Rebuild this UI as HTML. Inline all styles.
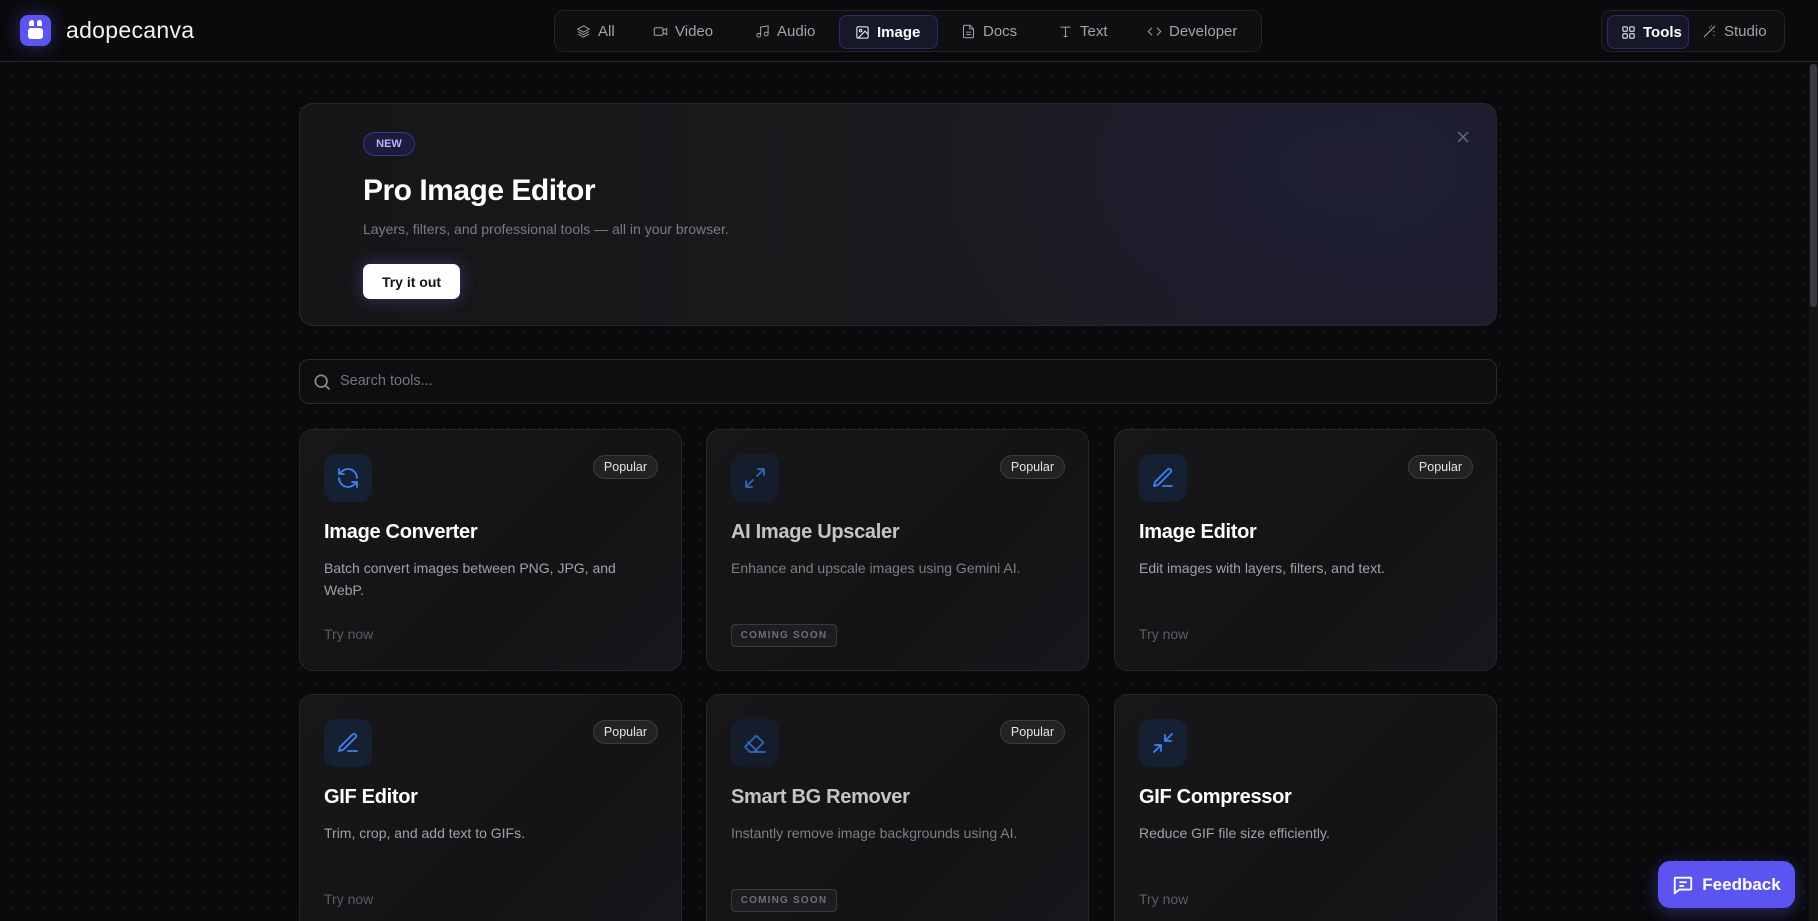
<!DOCTYPE html>
<html><head><meta charset="utf-8">
<style>
*{box-sizing:border-box;margin:0;padding:0}
html,body{width:1818px;height:921px;overflow:hidden}
body{background:#0a0a0c;font-family:"Liberation Sans",sans-serif;color:#fff;position:relative;
background-image:radial-gradient(circle,#1c1c20 1px,transparent 1.3px);background-size:16px 16px;background-position:4px 4px}
.hdr{position:absolute;left:0;top:0;width:1818px;height:62px;background:#0a0a0c;border-bottom:1px solid #26262b}
.abs{position:absolute}
.logo{left:20px;top:15px;width:31px;height:31px;border-radius:8px;background:#5b54f0;box-shadow:0 0 18px rgba(91,84,240,.45)}
.brand{left:66px;top:17px;font-size:23px;color:#f2f2f2;letter-spacing:.3px}
.nav{left:554px;top:10px;width:708px;height:42px;border:1px solid #222227;border-radius:10px;background:#0f0f12}
.ni{position:absolute;top:0;height:40px;display:flex;align-items:center;gap:7px;font-size:15px;color:#a3a3aa}
.ni svg{width:15px;height:15px;stroke:#a3a3aa;fill:none;stroke-width:1.6}
.act{background:#17172a;border:1px solid #2d2b6a;border-radius:8px;color:#fff;font-weight:bold}
.act svg{stroke:#fff}
.rt{left:1601px;top:10px;width:184px;height:42px;border:1px solid #222227;border-radius:10px;background:#0f0f12}
.sb{left:1809px;top:64px;width:9px;height:857px;background:#151517}
.sbt{left:1810px;top:64px;width:7px;height:243px;background:#3a3a3e;border-radius:4px}
.banner{left:299px;top:103px;width:1198px;height:223px;border:1px solid #26262c;border-radius:14px;
background:radial-gradient(ellipse 420px 260px at 88% 30%,#1f1e35,transparent),linear-gradient(90deg,#161618,#1b1b1f 60%,#1d1c2a)}
.new{left:363px;top:132px;width:52px;height:24px;border-radius:12px;background:#1d1c3a;border:1px solid #3a368a;color:#b8b4ff;font-size:11px;font-weight:bold;display:flex;align-items:center;justify-content:center}
.btitle{left:363px;top:174px;font-size:30px;font-weight:bold;letter-spacing:-.5px}
.bsub{left:363px;top:221px;font-size:14px;color:#7a7a82}
.try{left:363px;top:264px;width:97px;height:35px;background:#fff;color:#111;border-radius:7px;font-size:14px;font-weight:bold;display:flex;align-items:center;justify-content:center;box-shadow:0 0 16px rgba(120,110,255,.35)}
.search{left:299px;top:359px;width:1198px;height:45px;border:1px solid #2a2a2f;border-radius:10px;background:#0e0e10}
.card{position:absolute;width:383px;height:242px;border:1px solid #26262b;border-radius:14px;background:linear-gradient(135deg,#171719,#141416 60%,#17171c)}
.ic{position:absolute;left:24px;top:24px;width:48px;height:48px;border-radius:12px;background:#152033;display:flex;align-items:center;justify-content:center}
.ic svg{width:24px;height:24px;fill:none;stroke:#3b82f6;stroke-width:1.8;stroke-linecap:round;stroke-linejoin:round}
.pop{position:absolute;right:23px;top:25px;height:24px;padding:0 10px;border-radius:12px;background:#232326;border:1px solid #3a3a3f;font-size:12.5px;color:#e5e5e5;display:flex;align-items:center}
.ct{position:absolute;left:24px;top:91px;font-size:20px;font-weight:bold;letter-spacing:-.3px}
.cd{position:absolute;left:24px;top:127px;width:330px;font-size:14px;line-height:22px;color:#a1a1a8}
.tn{position:absolute;left:24px;top:196px;font-size:14px;color:#5c5c63}
.cs{position:absolute;left:24px;top:194px;width:106px;height:23px;border:1px solid #3a3a3e;border-radius:4px;background:#1d1d20;font-size:10px;letter-spacing:1.2px;font-weight:bold;color:#6e6e74;display:flex;align-items:center;justify-content:center}
.dim .ic,.dim .ct,.dim .cd{opacity:.75}
.fb{left:1658px;top:861px;width:137px;height:47px;border-radius:12px;background:#5b54f0;display:flex;align-items:center;justify-content:center;gap:8px;font-size:17px;font-weight:bold;box-shadow:0 4px 16px rgba(91,84,240,.4)}
</style></head><body>
<div class="hdr"></div>
<div class="abs logo"><svg width="31" height="31" viewBox="0 0 31 31"><path d="M9 8c0-2 2-3 3-3s2 1 2 3v3H9z M17 8c0-2 1-3 2.5-3S22 6 22 8v3h-5z" fill="#fff"/><rect x="8" y="13" width="15" height="11" rx="3" fill="#fff"/></svg></div>
<div class="abs brand">adopecanva</div>
<div class="abs nav">
<div class="ni" style="left:21px"><svg viewBox="0 0 24 24"><path d="M12 3 3 8l9 5 9-5z M3 12l9 5 9-5 M3 16l9 5 9-5"/></svg>All</div>
<div class="ni" style="left:98px"><svg viewBox="0 0 24 24"><rect x="2" y="6" width="14" height="12" rx="2"/><path d="m16 10 6-3v10l-6-3"/></svg>Video</div>
<div class="ni" style="left:200px"><svg viewBox="0 0 24 24"><path d="M9 18V5l12-2v13"/><circle cx="6" cy="18" r="3"/><circle cx="18" cy="16" r="3"/></svg>Audio</div>
<div class="ni act" style="left:284px;top:4px;height:34px;width:99px;padding-left:15px"><svg viewBox="0 0 24 24"><rect x="3" y="3" width="18" height="18" rx="2"/><circle cx="9" cy="9" r="2"/><path d="m21 15-5-5L5 21"/></svg>Image</div>
<div class="ni" style="left:406px"><svg viewBox="0 0 24 24"><path d="M14 2H6a2 2 0 0 0-2 2v16a2 2 0 0 0 2 2h12a2 2 0 0 0 2-2V8z M14 2v6h6 M8 13h8 M8 17h8"/></svg>Docs</div>
<div class="ni" style="left:503px"><svg viewBox="0 0 24 24"><path d="M4 5h16 M12 5v15 M9 20h6"/></svg>Text</div>
<div class="ni" style="left:592px"><svg viewBox="0 0 24 24"><path d="m16 18 6-6-6-6 M8 6l-6 6 6 6"/></svg>Developer</div>
</div>
<div class="abs rt">
<div class="ni act" style="left:5px;top:4px;height:34px;width:82px;padding-left:13px"><svg viewBox="0 0 24 24"><rect x="3" y="3" width="7" height="7" rx="1"/><rect x="14" y="3" width="7" height="7" rx="1"/><rect x="3" y="14" width="7" height="7" rx="1"/><rect x="14" y="14" width="7" height="7" rx="1"/></svg>Tools</div>
<div class="ni" style="left:100px"><svg viewBox="0 0 24 24"><path d="M3 21 21 3 M15 4V2 M15 10V8 M11 6h2 M17 6h2 M19 13v-2 M19 17v2"/></svg>Studio</div>
</div>
<div class="abs sb"></div><div class="abs sbt"></div>

<div class="abs banner"></div>
<div class="abs new">NEW</div>
<div class="abs btitle">Pro Image Editor</div>
<div class="abs bsub">Layers, filters, and professional tools — all in your browser.</div>
<div class="abs try">Try it out</div>
<svg class="abs" style="left:1457px;top:131px" width="12" height="12" viewBox="0 0 12 12"><path d="M1 1l10 10M11 1 1 11" stroke="#6a6a72" stroke-width="1.5"/></svg>

<div class="abs search"><svg style="position:absolute;left:12px;top:12px" width="20" height="20" viewBox="0 0 24 24" fill="none" stroke="#8a8a92" stroke-width="2"><circle cx="11" cy="11" r="7"/><path d="m21 21-4.5-4.5"/></svg><div style="position:absolute;left:40px;top:13px;font-size:14.5px;color:#74747c">Search tools...</div></div>

<div class="card" style="left:299px;top:429px"><div class="ic"><svg viewBox="0 0 24 24"><path d="M21 12a9 9 0 0 0-15.5-6.2L3 8 M3 3v5h5 M3 12a9 9 0 0 0 15.5 6.2L21 16 M21 21v-5h-5"/></svg></div><div class="pop">Popular</div><div class="ct">Image Converter</div><div class="cd">Batch convert images between PNG, JPG, and WebP.</div><div class="tn">Try now</div></div>
<div class="card dim" style="left:706px;top:429px"><div class="ic"><svg viewBox="0 0 24 24"><path d="M15 3h6v6 M21 3l-7 7 M9 21H3v-6 M3 21l7-7"/></svg></div><div class="pop">Popular</div><div class="ct">AI Image Upscaler</div><div class="cd">Enhance and upscale images using Gemini AI.</div><div class="cs">COMING SOON</div></div>
<div class="card" style="left:1114px;top:429px"><div class="ic"><svg viewBox="0 0 24 24"><path d="M12 20h9 M16.5 3.5a2.1 2.1 0 0 1 3 3L7 19l-4 1 1-4z"/></svg></div><div class="pop">Popular</div><div class="ct">Image Editor</div><div class="cd">Edit images with layers, filters, and text.</div><div class="tn">Try now</div></div>

<div class="card" style="left:299px;top:694px"><div class="ic"><svg viewBox="0 0 24 24"><path d="M12 20h9 M16.5 3.5a2.1 2.1 0 0 1 3 3L7 19l-4 1 1-4z"/></svg></div><div class="pop">Popular</div><div class="ct">GIF Editor</div><div class="cd">Trim, crop, and add text to GIFs.</div><div class="tn">Try now</div></div>
<div class="card dim" style="left:706px;top:694px"><div class="ic"><svg viewBox="0 0 24 24"><path d="m7 21-4.3-4.3a1 1 0 0 1 0-1.4l10-10a1 1 0 0 1 1.4 0l5.6 5.6a1 1 0 0 1 0 1.4L11 21z M22 21H7 M5 11l9 9"/></svg></div><div class="pop">Popular</div><div class="ct">Smart BG Remover</div><div class="cd">Instantly remove image backgrounds using AI.</div><div class="cs">COMING SOON</div></div>
<div class="card" style="left:1114px;top:694px"><div class="ic"><svg viewBox="0 0 24 24"><path d="M4 14h6v6 M10 14l-7 7 M20 10h-6V4 M14 10l7-7"/></svg></div><div class="ct">GIF Compressor</div><div class="cd">Reduce GIF file size efficiently.</div><div class="tn">Try now</div></div>

<div class="abs fb"><svg width="22" height="22" viewBox="0 0 24 24" fill="none" stroke="#fff" stroke-width="2" stroke-linejoin="round"><path d="M4 4h16a1 1 0 0 1 1 1v11a1 1 0 0 1-1 1H8l-5 4V5a1 1 0 0 1 1-1z M8 9h8 M8 13h5"/></svg>Feedback</div>
</body></html>
